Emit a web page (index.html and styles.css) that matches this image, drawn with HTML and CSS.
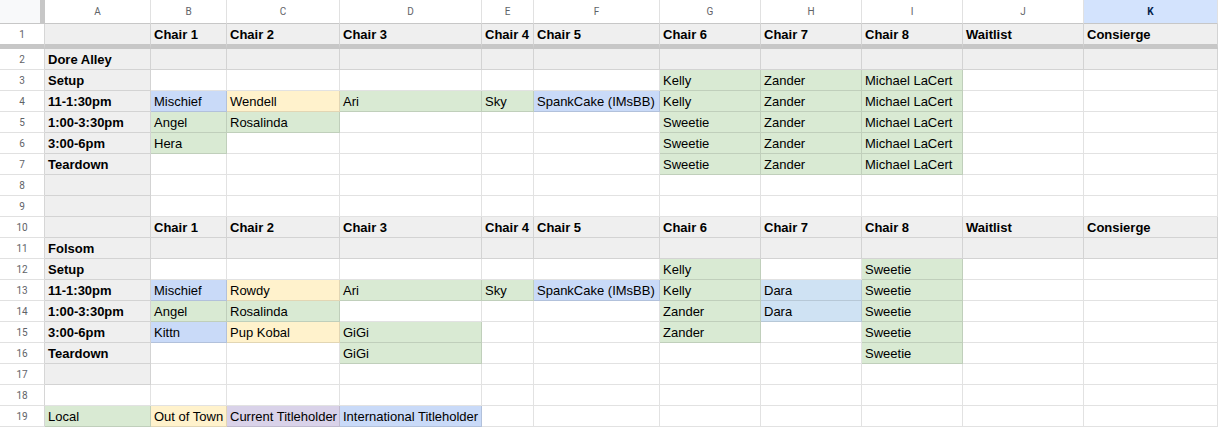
FILE: index.html
```html
<!DOCTYPE html>
<html lang="en">
<head>
<meta charset="utf-8">
<title>Chair Schedule</title>
<link rel="stylesheet" href="styles.css">
</head>
<body>
<div class="sheet">
  <div class="corner"></div>
  <div class="ch">A</div><div class="ch">B</div><div class="ch">C</div><div class="ch">D</div><div class="ch">E</div><div class="ch">F</div><div class="ch">G</div><div class="ch">H</div><div class="ch">I</div><div class="ch">J</div><div class="ch sel">K</div>

  <div class="rn fz">1</div>
  <div class="c g fz"></div><div class="c g fz b">Chair 1</div><div class="c g fz b">Chair 2</div><div class="c g fz b">Chair 3</div><div class="c g fz b">Chair 4</div><div class="c g fz b">Chair 5</div><div class="c g fz b">Chair 6</div><div class="c g fz b">Chair 7</div><div class="c g fz b">Chair 8</div><div class="c g fz b">Waitlist</div><div class="c g fz b">Consierge</div>

  <div class="rn">2</div>
  <div class="c g b">Dore Alley</div><div class="c g"></div><div class="c g"></div><div class="c g"></div><div class="c g"></div><div class="c g"></div><div class="c g"></div><div class="c g"></div><div class="c g"></div><div class="c g"></div><div class="c g"></div>

  <div class="rn">3</div>
  <div class="c g b">Setup</div><div class="c"></div><div class="c"></div><div class="c"></div><div class="c"></div><div class="c"></div><div class="c gr">Kelly</div><div class="c gr">Zander</div><div class="c gr">Michael LaCert</div><div class="c"></div><div class="c"></div>

  <div class="rn">4</div>
  <div class="c g b">11-1:30pm</div><div class="c bl">Mischief</div><div class="c ye">Wendell</div><div class="c gr">Ari</div><div class="c gr">Sky</div><div class="c bl">SpankCake (IMsBB)</div><div class="c gr">Kelly</div><div class="c gr">Zander</div><div class="c gr">Michael LaCert</div><div class="c"></div><div class="c"></div>

  <div class="rn">5</div>
  <div class="c g b">1:00-3:30pm</div><div class="c gr">Angel</div><div class="c gr">Rosalinda</div><div class="c"></div><div class="c"></div><div class="c"></div><div class="c gr">Sweetie</div><div class="c gr">Zander</div><div class="c gr">Michael LaCert</div><div class="c"></div><div class="c"></div>

  <div class="rn">6</div>
  <div class="c g b">3:00-6pm</div><div class="c gr">Hera</div><div class="c"></div><div class="c"></div><div class="c"></div><div class="c"></div><div class="c gr">Sweetie</div><div class="c gr">Zander</div><div class="c gr">Michael LaCert</div><div class="c"></div><div class="c"></div>

  <div class="rn">7</div>
  <div class="c g b">Teardown</div><div class="c"></div><div class="c"></div><div class="c"></div><div class="c"></div><div class="c"></div><div class="c gr">Sweetie</div><div class="c gr">Zander</div><div class="c gr">Michael LaCert</div><div class="c"></div><div class="c"></div>

  <div class="rn">8</div>
  <div class="c g"></div><div class="c"></div><div class="c"></div><div class="c"></div><div class="c"></div><div class="c"></div><div class="c"></div><div class="c"></div><div class="c"></div><div class="c"></div><div class="c"></div>

  <div class="rn">9</div>
  <div class="c g"></div><div class="c"></div><div class="c"></div><div class="c"></div><div class="c"></div><div class="c"></div><div class="c"></div><div class="c"></div><div class="c"></div><div class="c"></div><div class="c"></div>

  <div class="rn">10</div>
  <div class="c g"></div><div class="c g b">Chair 1</div><div class="c g b">Chair 2</div><div class="c g b">Chair 3</div><div class="c g b">Chair 4</div><div class="c g b">Chair 5</div><div class="c g b">Chair 6</div><div class="c g b">Chair 7</div><div class="c g b">Chair 8</div><div class="c g b">Waitlist</div><div class="c g b">Consierge</div>

  <div class="rn">11</div>
  <div class="c g b">Folsom</div><div class="c g"></div><div class="c g"></div><div class="c g"></div><div class="c g"></div><div class="c g"></div><div class="c g"></div><div class="c g"></div><div class="c g"></div><div class="c g"></div><div class="c g"></div>

  <div class="rn">12</div>
  <div class="c g b">Setup</div><div class="c"></div><div class="c"></div><div class="c"></div><div class="c"></div><div class="c"></div><div class="c gr">Kelly</div><div class="c"></div><div class="c gr">Sweetie</div><div class="c"></div><div class="c"></div>

  <div class="rn">13</div>
  <div class="c g b">11-1:30pm</div><div class="c bl">Mischief</div><div class="c ye">Rowdy</div><div class="c gr">Ari</div><div class="c gr">Sky</div><div class="c bl">SpankCake (IMsBB)</div><div class="c gr">Kelly</div><div class="c lb">Dara</div><div class="c gr">Sweetie</div><div class="c"></div><div class="c"></div>

  <div class="rn">14</div>
  <div class="c g b">1:00-3:30pm</div><div class="c gr">Angel</div><div class="c gr">Rosalinda</div><div class="c"></div><div class="c"></div><div class="c"></div><div class="c gr">Zander</div><div class="c lb">Dara</div><div class="c gr">Sweetie</div><div class="c"></div><div class="c"></div>

  <div class="rn">15</div>
  <div class="c g b">3:00-6pm</div><div class="c bl">Kittn</div><div class="c ye">Pup Kobal</div><div class="c gr">GiGi</div><div class="c"></div><div class="c"></div><div class="c gr">Zander</div><div class="c"></div><div class="c gr">Sweetie</div><div class="c"></div><div class="c"></div>

  <div class="rn">16</div>
  <div class="c g b">Teardown</div><div class="c"></div><div class="c"></div><div class="c gr">GiGi</div><div class="c"></div><div class="c"></div><div class="c"></div><div class="c"></div><div class="c gr">Sweetie</div><div class="c"></div><div class="c"></div>

  <div class="rn">17</div>
  <div class="c g"></div><div class="c"></div><div class="c"></div><div class="c"></div><div class="c"></div><div class="c"></div><div class="c"></div><div class="c"></div><div class="c"></div><div class="c"></div><div class="c"></div>

  <div class="rn">18</div>
  <div class="c"></div><div class="c"></div><div class="c"></div><div class="c"></div><div class="c"></div><div class="c"></div><div class="c"></div><div class="c"></div><div class="c"></div><div class="c"></div><div class="c"></div>

  <div class="rn">19</div>
  <div class="c gr">Local</div><div class="c ye">Out of Town</div><div class="c pu">Current Titleholder</div><div class="c bl">International Titleholder</div><div class="c"></div><div class="c"></div><div class="c"></div><div class="c"></div><div class="c"></div><div class="c"></div><div class="c"></div>
</div>
</body>
</html>
```
FILE: styles.css
```css
html, body {
  margin: 0;
  padding: 0;
  background: #ffffff;
  overflow: hidden;
}

body {
  font-family: "Liberation Sans", Arial, sans-serif;
}

.sheet {
  display: grid;
  grid-template-columns: 45px 106px 76px 113px 142px 52px 126px 101px 101px 101px 121px 1fr;
  grid-template-rows: 24px 25px;
  grid-auto-rows: 21px;
  width: 1218px;
}

.corner {
  box-sizing: border-box;
  background: #f8f9fa;
  border-right: 5px solid #c7c7c7;
  border-bottom: 1px solid #c7c7c7;
}

.ch {
  box-sizing: border-box;
  border-right: 1px solid #e1e1e1;
  border-bottom: 1px solid #c7c7c7;
  text-align: center;
  font-family: Roboto, "Liberation Sans", sans-serif;
  font-size: 10px;
  line-height: 23px;
  color: #5f6368;
  background: #ffffff;
}

.ch.sel {
  background: #d3e3fd;
  color: #041e49;
  font-weight: 700;
}

.rn {
  box-sizing: border-box;
  border-right: 1px solid #d6d6d6;
  border-bottom: 1px solid #e1e1e1;
  padding-top: 1px;
  text-align: center;
  font-family: Roboto, "Liberation Sans", sans-serif;
  font-size: 10px;
  line-height: 19px;
  color: #5f6368;
  background: #ffffff;
}

.c {
  box-sizing: border-box;
  border-right: 1px solid rgba(0, 0, 0, 0.115);
  border-bottom: 1px solid rgba(0, 0, 0, 0.115);
  padding: 1px 3px 0;
  font-size: 13px;
  line-height: 19px;
  white-space: nowrap;
  overflow: hidden;
  color: #000000;
}

.fz {
  border-bottom: 5px solid #c7c7c7;
}

.b { font-weight: 700; }
.g { background: #efefef; }
.gr { background: #d9ead3; }
.bl { background: #c9daf8; }
.ye { background: #fff2cc; }
.pu { background: #d9d2e9; }
.lb { background: #cfe2f3; }
```
